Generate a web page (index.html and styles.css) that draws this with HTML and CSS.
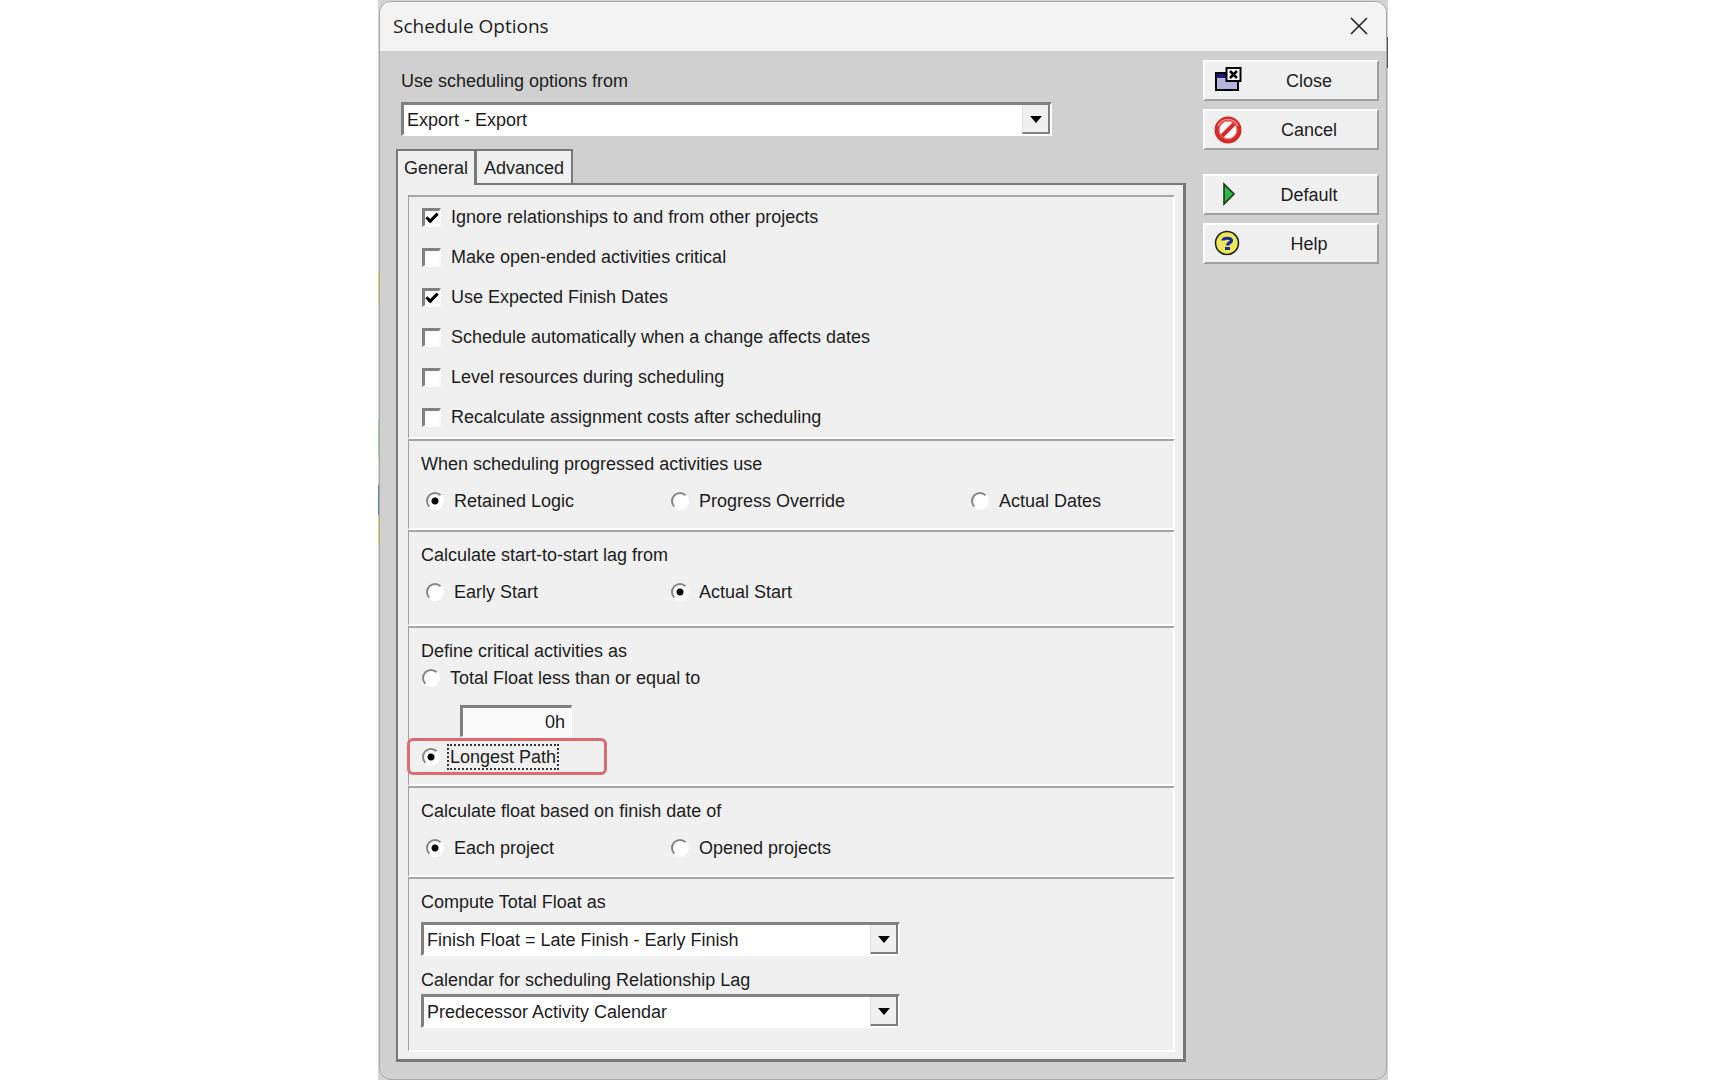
FILE: index.html
```html
<!DOCTYPE html>
<html lang="en">
<head>
  <meta charset="UTF-8">
  <title>Schedule Options</title>
  <link rel="stylesheet" href="styles.css">
</head>
<body>
  <div class="backdrop">
    <form class="dialog" onsubmit="return false">
      <header class="titlebar">
        <h1>Schedule Options</h1>
        <button type="button" class="close-x" aria-label="Close window">
          <svg width="18" height="18" viewBox="0 0 18 18"><path d="M1 1L17 17M17 1L1 17" stroke="#222" stroke-width="1.6" fill="none"/></svg>
        </button>
      </header>

      <div class="content">
        <main class="options">
          <label class="source-label" for="source">Use scheduling options from</label>
          <div class="combo source">
            <select id="source"><option>Export - Export</option></select>
            <span class="arrow"></span>
          </div>

          <div class="tabs" role="tablist">
            <button type="button" class="tab active" role="tab" aria-selected="true">General</button>
            <button type="button" class="tab" role="tab" aria-selected="false">Advanced</button>
          </div>

          <div class="panel">
            <section class="group checks">
              <label class="choice"><input type="checkbox" checked>Ignore relationships to and from other projects</label>
              <label class="choice"><input type="checkbox">Make open-ended activities critical</label>
              <label class="choice"><input type="checkbox" checked>Use Expected Finish Dates</label>
              <label class="choice"><input type="checkbox">Schedule automatically when a change affects dates</label>
              <label class="choice"><input type="checkbox">Level resources during scheduling</label>
              <label class="choice"><input type="checkbox">Recalculate assignment costs after scheduling</label>
            </section>

            <section class="group">
              <h2>When scheduling progressed activities use</h2>
              <div class="radios">
                <label class="choice"><input type="radio" name="progress" checked>Retained Logic</label>
                <label class="choice"><input type="radio" name="progress">Progress Override</label>
                <label class="choice"><input type="radio" name="progress">Actual Dates</label>
              </div>
            </section>

            <section class="group lag">
              <h2>Calculate start-to-start lag from</h2>
              <div class="radios">
                <label class="choice"><input type="radio" name="lag">Early Start</label>
                <label class="choice"><input type="radio" name="lag" checked>Actual Start</label>
              </div>
            </section>

            <section class="group critical">
              <h2>Define critical activities as</h2>
              <label class="choice"><input type="radio" name="critical">Total Float less than or equal to</label>
              <input class="hours" type="text" value="0h" aria-label="Total float limit">
              <label class="choice marked"><input type="radio" name="critical" checked><span class="focused">Longest Path</span></label>
            </section>

            <section class="group">
              <h2>Calculate float based on finish date of</h2>
              <div class="radios">
                <label class="choice"><input type="radio" name="float" checked>Each project</label>
                <label class="choice"><input type="radio" name="float">Opened projects</label>
              </div>
            </section>

            <section class="group compute">
              <label for="compute">Compute Total Float as</label>
              <div class="combo">
                <select id="compute"><option>Finish Float = Late Finish - Early Finish</option></select>
                <span class="arrow"></span>
              </div>
              <label for="calendar">Calendar for scheduling Relationship Lag</label>
              <div class="combo">
                <select id="calendar"><option>Predecessor Activity Calendar</option></select>
                <span class="arrow"></span>
              </div>
            </section>
          </div>
        </main>

        <aside class="actions">
          <button type="button" class="action">
            <svg width="28" height="28" viewBox="0 0 28 28">
              <rect x="2" y="6" width="22" height="17" fill="#b4b4dc" stroke="#000" stroke-width="2"/>
              <rect x="3" y="7" width="20" height="4" fill="#1c1c78"/>
              <rect x="12.5" y="1" width="14" height="13" fill="#fff" stroke="#000" stroke-width="2"/>
              <path d="M16 4l7 7M23 4l-7 7" stroke="#000" stroke-width="2.6"/>
            </svg>
            <span>Close</span>
          </button>
          <button type="button" class="action">
            <svg width="28" height="28" viewBox="0 0 28 28">
              <circle cx="14" cy="14" r="11" fill="#fff" stroke="#d62a2a" stroke-width="5"/>
              <circle cx="14" cy="14" r="9" fill="none" stroke="#ee8a84" stroke-width="1"/>
              <path d="M8 20L20 8" stroke="#d62a2a" stroke-width="4"/>
              <path d="M4 10a11 11 0 0 1 20 0" stroke="#ee8a84" stroke-width="1.5" fill="none"/>
            </svg>
            <span>Cancel</span>
          </button>
          <button type="button" class="action spaced">
            <svg width="28" height="28" viewBox="0 0 28 28">
              <path d="M10 3L20 13L10 23Z" fill="#2fb845" stroke="#143c1a" stroke-width="1.6"/>
            </svg>
            <span>Default</span>
          </button>
          <button type="button" class="action">
            <svg width="28" height="28" viewBox="0 0 28 28">
              <circle cx="13" cy="13" r="11.5" fill="#ece85a" stroke="#222" stroke-width="1.6"/>
              <path d="M9 10.5C9 7.500 17.500 7.500 17.500 10.500C17.500 13 13.500 12.500 13.500 15.500" fill="none" stroke="#1b2ca0" stroke-width="3.200"/>
              <rect x="11" y="17" width="5" height="3" fill="#1b2ca0"/>
            </svg>
            <span>Help</span>
          </button>
        </aside>
      </div>
    </form>
  </div>
</body>
</html>
```
FILE: styles.css
```css
* {
  box-sizing: border-box;
}

body {
  margin: 0;
  padding-left: 44px;
  background: #fff;
  color: #1c1c1c;
  font-family: "Liberation Sans", Arial, sans-serif;
  font-size: 18px;
  line-height: 20px;
}

button, select, input {
  font: inherit;
  color: inherit;
}

h1, h2 {
  margin: 0;
  font-weight: normal;
}

/* slivers of the window behind the dialog */
.backdrop {
  max-width: 1010px;
  margin: 0 auto;
  padding: 1px 1px 0;
  background:
    linear-gradient(#d8d36a, #d8d36a) 0 272px / 2px 31px no-repeat,
    linear-gradient(#9ccf9c, #9ccf9c) 0 419px / 2px 38px no-repeat,
    linear-gradient(#5b82b4, #5b82b4) 0 485px / 2px 30px no-repeat,
    linear-gradient(#d8d36a, #d8d36a) 0 515px / 2px 29px no-repeat,
    linear-gradient(#555, #555) 100% 37px / 2px 31px no-repeat,
    #d4d4d4;
}

.dialog {
  min-height: calc(100vh - 1px);
  border: 1px solid #a8a8a8;
  border-radius: 12px;
  background: #d0d0d0;
  overflow: hidden;
}

.titlebar {
  display: flex;
  align-items: center;
  justify-content: space-between;
  height: 49px;
  padding: 0 18px 2px 13px;
  background: #f3f3f3;
}

.titlebar h1 {
  font-family: "Open Sans", "Segoe UI", sans-serif;
  font-size: 19px;
}

.close-x {
  display: flex;
  padding: 0;
  border: 0;
  background: none;
}

.content {
  display: flex;
  gap: 17px;
  padding: 9px 7px 16px 16px;
}

.options {
  flex: 1;
}

.source-label {
  display: block;
  margin: 11px 5px;
}

/* drop-downs */
.combo {
  position: relative;
  width: 479px;
  max-width: 100%;
}

.combo.source {
  width: 651px;
  margin: 0 5px 13px;
}

.combo select {
  display: block;
  width: 100%;
  height: 34px;
  padding: 0 30px 0 3px;
  border: 2px solid #808080;
  border-width: 3px 2px 2px 3px;
  border-color: #808080 #fff #fff #808080;
  border-radius: 0;
  background: #fff;
  appearance: none;
}

.arrow {
  position: absolute;
  top: 3px;
  right: 2px;
  width: 28px;
  height: 29px;
  border: 2px solid #808080;
  border-top: 0;
  border-left: 1px solid #e4e4e4;
  background: #f0f0f0;
  pointer-events: none;
}

.arrow::after {
  content: "";
  position: absolute;
  top: 11px;
  left: 7px;
  border: 6px solid transparent;
  border-top: 7px solid #000;
  border-bottom: 0;
}

/* tabs */
.tabs {
  display: flex;
}

.tab {
  height: 34px;
  padding: 2px 7px 0;
  border: 2px solid #787878;
  border-bottom: 0;
  border-left-width: 1px;
  background: #f0f0f0;
}

.tab.active {
  position: relative;
  height: 36px;
  margin-bottom: -2px;
  padding: 0 6px;
  border-left-width: 2px;
}

.panel {
  padding: 10px 8px 7px 10px;
  border: 2px solid #787878;
  border-right-width: 3px;
  border-bottom-width: 3px;
  background: #f0f0f0;
}

.group {
  padding: 13px 11px 17px 12px;
  border: 2px solid #fff;
  border-top-color: #a6a6a6;
  border-left: 1px solid #a0a0a0;
}

.group h2 {
  font-size: 18px;
}

.choice {
  display: flex;
  align-items: center;
  gap: 10px;
}

.checks {
  display: flex;
  flex-direction: column;
  gap: 20px;
  padding: 10px 13px;
}

.radios {
  display: grid;
  grid-template-columns: 245px 300px auto;
  margin-top: 17px;
  padding-left: 5px;
}

.lag {
  padding-bottom: 22px;
}

input[type="checkbox"] {
  width: 19px;
  height: 19px;
  margin: 0;
  border: 2px solid #fafafa;
  border-top: 3px solid #808080;
  border-left: 3px solid #808080;
  background: #fff;
  appearance: none;
}

input[type="checkbox"]:checked::before {
  content: "";
  display: block;
  width: 9px;
  height: 4px;
  margin: 2px 0 0 1px;
  border: 3px solid #000;
  border-top: 0;
  border-right: 0;
  transform: rotate(-45deg);
}

input[type="radio"] {
  width: 18px;
  height: 18px;
  margin: 0;
  border: 2px solid #fff;
  border-top-color: #858585;
  border-left-color: #858585;
  border-radius: 50%;
  background: #fff;
  appearance: none;
}

input[type="radio"]:checked {
  background: radial-gradient(circle, #000 3px, #fff 4px);
}

.critical .choice {
  margin-top: 7px;
  padding-left: 1px;
}

.hours {
  display: block;
  width: 112px;
  height: 32px;
  margin: 17px 0 0 39px;
  padding: 0 6px;
  border: 1px solid #fff;
  border-top: 3px solid #808080;
  border-left: 3px solid #808080;
  background: #fafafa;
  text-align: right;
}

.critical .marked {
  position: relative;
  margin-top: 10px;
}

.marked::after {
  content: "";
  position: absolute;
  box-sizing: border-box;
  top: -9px;
  left: -14px;
  width: 200px;
  height: 37px;
  border: 3px solid #dc6a6e;
  border-radius: 6px;
}

.focused {
  outline: 2px dotted #333;
  outline-offset: 1px;
}

.compute {
  display: flex;
  flex-direction: column;
  padding-bottom: 22px;
}

.compute .combo {
  margin: 10px 0 14px;
}

.compute .combo:last-child {
  margin: 4px 0 0;
}

/* button column */
.actions {
  width: 176px;
}

.action {
  display: flex;
  align-items: center;
  width: 100%;
  height: 41px;
  margin-bottom: 8px;
  padding: 0 9px;
  border: 2px solid #fff;
  border-right-color: #a0a0a0;
  border-bottom-color: #a0a0a0;
  background: #f0f0f0;
}

.action.spaced {
  margin-top: 24px;
}

.action span {
  flex: 1;
  padding-left: 8px;
  text-align: center;
}
```
